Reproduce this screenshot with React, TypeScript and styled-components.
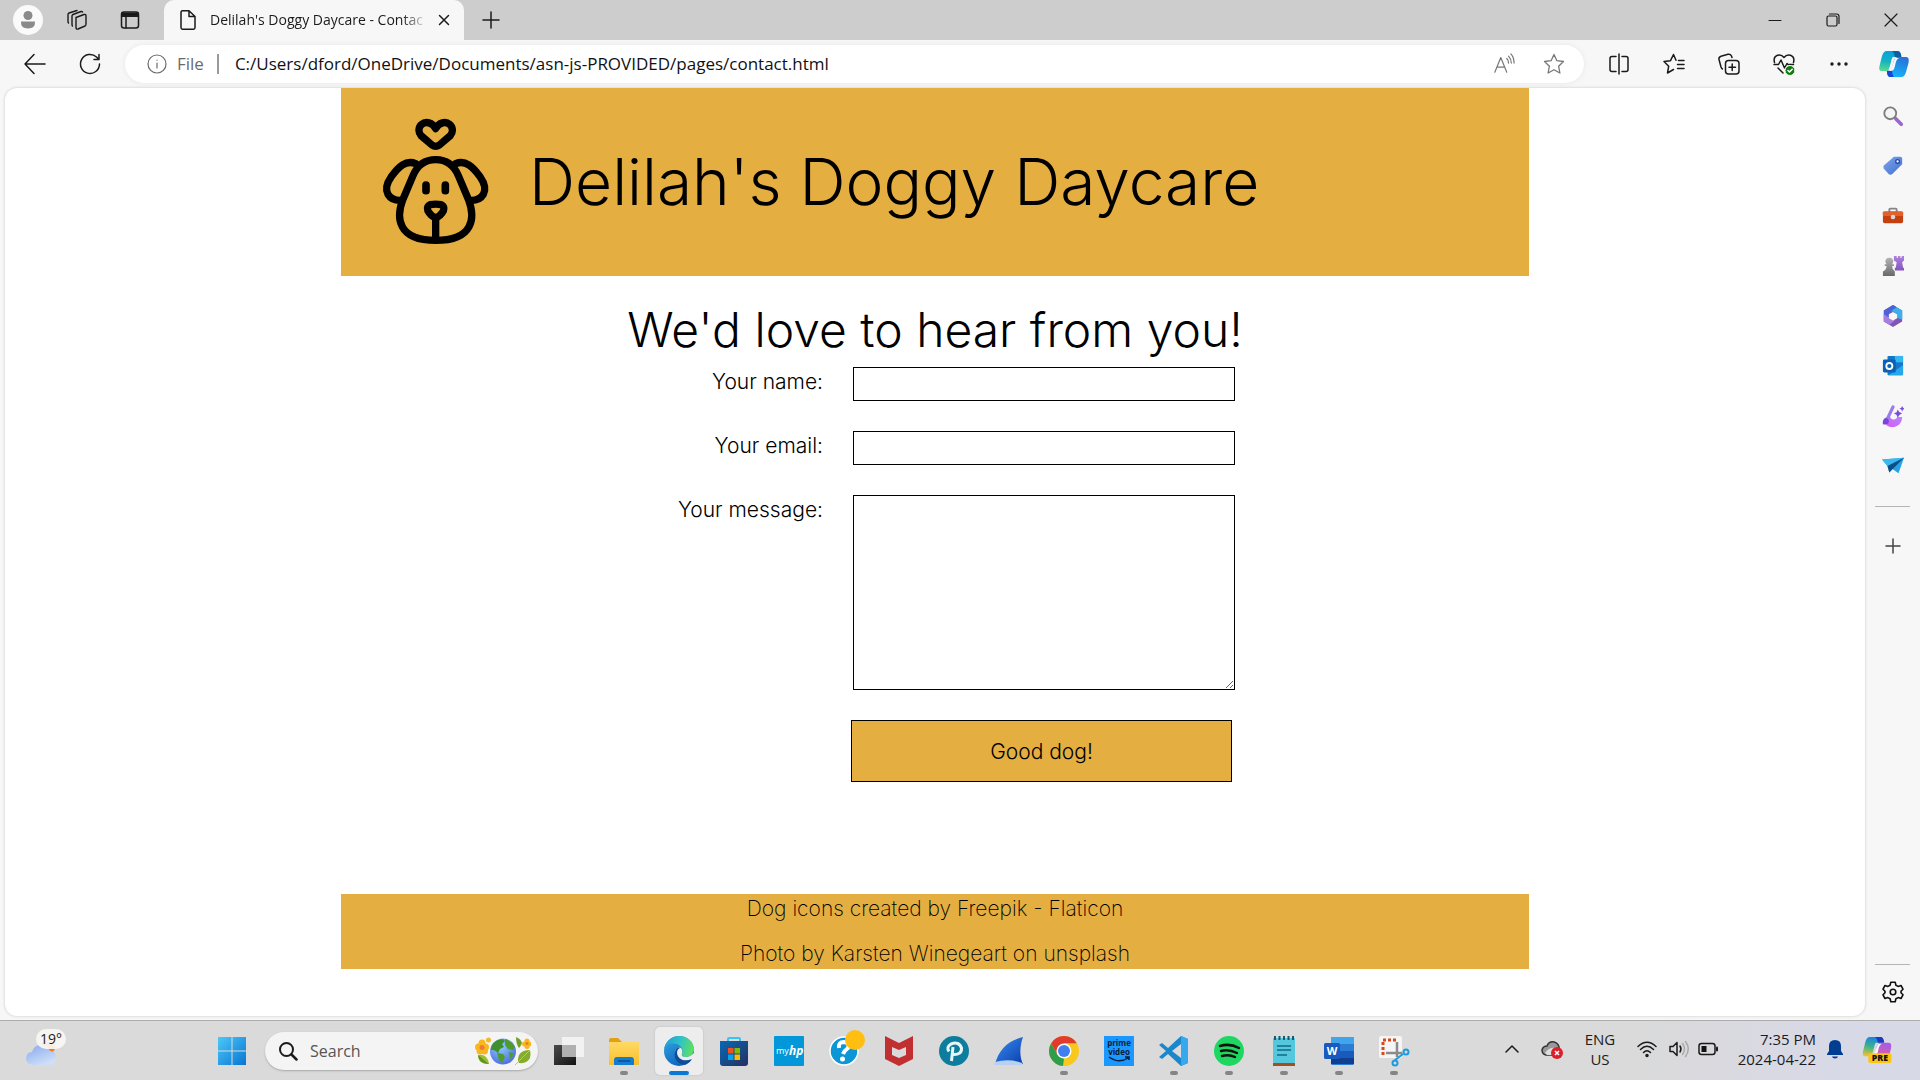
import React from "react";
import styled, { createGlobalStyle } from "styled-components";

const gold = "#e4ae40";
const uiFont = `"Open Sans", "Noto Sans", sans-serif`;
const pageFont = `Inter, "Open Sans", sans-serif`;

const GlobalStyle = createGlobalStyle`
  * { box-sizing: border-box; }
  body { margin: 0; background: #f7f7f7; font-family: ${uiFont}; }
  button { font: inherit; color: inherit; border: 0; background: none; padding: 0; }
`;

/* ---------- window ---------- */

const Screen = styled.div`
  display: flex;
  flex-direction: column;
  height: 100vh;
  background: #f7f7f7;
  overflow: hidden;
`;

const TitleBar = styled.header`
  display: flex;
  align-items: center;
  height: 40px;
  flex: none;
  padding-left: 6px;
  background: #cdcdcd;
`;

const BarButton = styled.button<{ $w?: number }>`
  display: flex;
  align-items: center;
  justify-content: center;
  flex: none;
  width: ${(p) => p.$w ?? 40}px;
  height: 40px;
`;

const Avatar = styled.span`
  display: flex;
  width: 30px;
  height: 30px;
  border-radius: 50%;
  background: #fafafa;
  align-items: center;
  justify-content: center;
`;

const Tab = styled.div`
  display: flex;
  align-items: center;
  align-self: stretch;
  width: 300px;
  margin-left: 8px;
  padding: 0 8px 0 14px;
  gap: 12px;
  border-radius: 10px 10px 0 0;
  background: #f7f7f7;
`;

const TabTitle = styled.span`
  flex: 1;
  overflow: hidden;
  white-space: nowrap;
  font-size: 14px;
  line-height: 24px;
  color: #1b1b1b;
  mask-image: linear-gradient(to right, #000 88%, transparent);
`;

const TabClose = styled.button`
  display: flex;
  align-items: center;
  justify-content: center;
  width: 24px;
  height: 24px;
  margin-left: -8px;
`;

const Spacer = styled.div`
  flex: 1;
`;

const ToolBar = styled.nav`
  display: flex;
  align-items: center;
  flex: none;
  height: 48px;
  gap: 15px;
  padding: 0 6px 0 15px;
`;

const AddressBar = styled.div`
  display: flex;
  align-items: center;
  flex: 1;
  min-width: 0;
  height: 38px;
  padding: 0 10px 0 22px;
  border-radius: 19px;
  background: #fff;
  box-shadow: 0 0 5px #e6e6e6;
  color: #6b6b6b;
  font-size: 17px;
`;

const SchemeText = styled.span`
  margin-left: 10px;
  padding-right: 13px;
  border-right: 2px solid #9a9a9a;
  line-height: 20px;
`;

const UrlInput = styled.input`
  flex: 1;
  min-width: 0;
  border: 0;
  outline: 0;
  padding: 0 16px;
  background: transparent;
  font-family: ${uiFont};
  font-size: 17px;
  line-height: 24px;
  color: #111;
`;

const AddressActions = styled.div`
  display: flex;
  gap: 10px;
`;

/* ---------- browser body ---------- */

const Body = styled.div`
  display: flex;
  flex: 1;
  min-height: 0;
  padding-left: 5px;
`;

const Viewport = styled.main`
  flex: 1;
  min-width: 0;
  margin-bottom: 4px;
  overflow: auto;
  border-radius: 12px;
  background: #fff;
  box-shadow: 0 0 3px #c4c4c4;
`;

const Site = styled.div`
  max-width: 1188px;
  margin: 0 auto;
  font-family: ${pageFont};
  color: #000;
`;

const SiteHeader = styled.header`
  display: flex;
  align-items: center;
  gap: 30px;
  padding: 30px;
  background: ${gold};
`;

const SiteTitle = styled.h1`
  margin: 0;
  font-size: 64px;
  line-height: 72px;
  font-weight: 300;
`;

const Heading = styled.h2`
  margin: 25px 0 8px;
  font-size: 48px;
  line-height: 58px;
  font-weight: 300;
  text-align: center;
`;

const Form = styled.form`
  display: grid;
  grid-template-columns: 188px 1fr;
  gap: 30px;
  max-width: 600px;
  margin: 0 auto;
`;

const Label = styled.label`
  padding-top: 3px;
  text-align: right;
  font-size: 21px;
  line-height: 24px;
  font-weight: 300;
`;

const TextField = styled.input`
  width: 100%;
  height: 34px;
  border: 1px solid #000;
  border-radius: 0;
  background: #fff;
  padding: 4px 8px;
  font: 300 21px ${pageFont};
`;

const MessageField = styled.textarea`
  display: block;
  width: 100%;
  height: 195px;
  border: 1px solid #000;
  background: #fff;
  padding: 8px;
  resize: both;
  font: 300 21px ${pageFont};
`;

const Submit = styled.button`
  grid-column: 2;
  height: 62px;
  margin: 0 3px 0 -2px;
  border: 1px solid #000;
  background: ${gold};
  font-size: 21px;
  font-weight: 300;
`;

const SiteFooter = styled.footer`
  display: flex;
  flex-direction: column;
  gap: 21px;
  margin-top: 112px;
  padding: 3px 0;
  background: ${gold};
  text-align: center;
  font-size: 21px;
  line-height: 24px;
  font-weight: 200;
`;

const Credit = styled.p`
  margin: 0;
`;

const SideBar = styled.aside`
  display: flex;
  flex-direction: column;
  align-items: center;
  gap: 18px;
  width: 55px;
  flex: none;
  padding-top: 12px;
`;

const SideButton = styled.button`
  display: flex;
  align-items: center;
  justify-content: center;
  width: 40px;
  height: 32px;
  flex: none;
`;

const SideRule = styled.hr`
  width: 35px;
  margin: 6px 0 5px;
  border: 0;
  border-top: 1px solid #b5b5b5;
`;

const SideFoot = styled.div`
  display: flex;
  flex-direction: column;
  align-items: center;
  gap: 6px;
  margin-top: auto;
  padding-bottom: 12px;
`;

/* ---------- task bar ---------- */

const TaskBar = styled.footer`
  display: flex;
  align-items: center;
  flex: none;
  height: 60px;
  padding: 0 20px 0 24px;
  border-top: 1px solid #acacac;
  background: linear-gradient(to right, #dadada 85%, #d8d9e6 95%);
  color: #1c1c1c;
  font-size: 15px;
  line-height: 20px;
`;

const Weather = styled.button`
  position: relative;
  width: 44px;
  height: 44px;
  margin-right: 140px;
  flex: none;
`;

const Temperature = styled.span`
  position: absolute;
  left: 12px;
  top: 0;
  width: 30px;
  border-radius: 10px;
  background: rgba(250, 247, 244, 0.92);
  font-size: 14px;
  text-align: center;
`;

const Apps = styled.div`
  display: flex;
  align-items: center;
  gap: 7px;
`;

const AppButton = styled.button<{ $active?: boolean }>`
  display: flex;
  flex-direction: column;
  align-items: center;
  gap: 5px;
  width: 48px;
  height: 48px;
  flex: none;
  padding-top: 9px;
  border-radius: 5px;
  background: ${(p) => (p.$active ? "#ededed" : "transparent")};
  box-shadow: ${(p) => (p.$active ? "0 0 2px #b8b8b8" : "none")};
`;

const RunMark = styled.span<{ $active?: boolean }>`
  width: ${(p) => (p.$active ? 20 : 8)}px;
  height: 4px;
  border-radius: 2px;
  background: ${(p) => (p.$active ? "#0a78d4" : "#858585")};
`;

const SearchBox = styled.label`
  display: flex;
  align-items: center;
  gap: 12px;
  width: 273px;
  height: 38px;
  flex: none;
  margin-left: 2px;
  padding: 0 7px 0 13px;
  border-radius: 19px;
  background: #f4f4f4;
  box-shadow: 0 1px 2px #a9a9a9;
`;

const SearchInput = styled.input`
  flex: 1;
  min-width: 0;
  border: 0;
  outline: 0;
  padding: 0;
  background: transparent;
  font-family: ${uiFont};
  font-size: 16px;
  &::placeholder { color: #555; opacity: 1; }
`;

const Tray = styled.div`
  display: flex;
  align-items: center;
  margin-left: auto;
  padding-bottom: 3px;
`;

const TrayButton = styled.button<{ $w: number }>`
  display: flex;
  align-items: center;
  justify-content: center;
  width: ${(p) => p.$w}px;
  height: 44px;
  flex: none;
`;

const Clock = styled.button`
  width: 92px;
  text-align: right;
`;

/* ---------- drawings ---------- */

type IconProps = { size?: number; h?: number; box?: string; color?: string; sw?: number; children: React.ReactNode };

const Line = ({ size = 24, h, box = "0 0 24 24", color = "#1b1b1b", sw = 1.5, children }: IconProps) => (
  <svg width={size} height={h ?? size} viewBox={box} fill="none" stroke={color} strokeWidth={sw} strokeLinecap="round" strokeLinejoin="round" aria-hidden="true">
    {children}
  </svg>
);

const Art = ({ size = 30, h, box = "0 0 30 30", children }: IconProps) => (
  <svg width={size} height={h ?? size} viewBox={box} aria-hidden="true">
    {children}
  </svg>
);

const HiddenDefs = styled.svg`
  position: absolute;
`;

const Gradients = () => (
  <HiddenDefs width="0" height="0" aria-hidden="true">
    <defs>
      <linearGradient id="win" x1="0" y1="0" x2="1" y2="1"><stop offset="0" stopColor="#4cc9f7" /><stop offset="1" stopColor="#0874d4" /></linearGradient>
      <linearGradient id="teal" x1="0.3" y1="0" x2="0.2" y2="1"><stop offset="0" stopColor="#0a9fe0" /><stop offset="0.5" stopColor="#14b3c0" /><stop offset="1" stopColor="#5fdc8c" /></linearGradient>
      <linearGradient id="blue" x1="0.8" y1="0" x2="0.4" y2="1"><stop offset="0" stopColor="#2a6fd6" /><stop offset="1" stopColor="#16b4f8" /></linearGradient>
      <linearGradient id="rain" x1="0.5" y1="0" x2="0.3" y2="1"><stop offset="0" stopColor="#1a7fe8" /><stop offset="0.5" stopColor="#3cb489" /><stop offset="1" stopColor="#f2c230" /></linearGradient>
      <linearGradient id="pink" x1="0.6" y1="0" x2="0.4" y2="1"><stop offset="0" stopColor="#a55be8" /><stop offset="1" stopColor="#f4617f" /></linearGradient>
      <linearGradient id="cloud" x1="0" y1="0" x2="0.6" y2="1"><stop offset="0" stopColor="#86a9ec" /><stop offset="1" stopColor="#cfdff8" /></linearGradient>
      <linearGradient id="folder" x1="0" y1="0" x2="0" y2="1"><stop offset="0" stopColor="#ffd964" /><stop offset="1" stopColor="#f9bf2c" /></linearGradient>
      <linearGradient id="edgeTop" x1="0" y1="0.4" x2="1" y2="0.6"><stop offset="0" stopColor="#1d9fd8" /><stop offset="0.5" stopColor="#2fc4c4" /><stop offset="1" stopColor="#63e05a" /></linearGradient>
      <linearGradient id="edgeLow" x1="0" y1="0" x2="0.6" y2="1"><stop offset="0" stopColor="#36a8e0" /><stop offset="1" stopColor="#0c62bd" /></linearGradient>
      <linearGradient id="store" x1="0" y1="0" x2="1" y2="1"><stop offset="0" stopColor="#0a67b5" /><stop offset="1" stopColor="#25315e" /></linearGradient>
      <linearGradient id="fin" x1="0" y1="0" x2="1" y2="1"><stop offset="0" stopColor="#3b8df2" /><stop offset="1" stopColor="#0a3fae" /></linearGradient>
      <linearGradient id="tag" x1="0" y1="0" x2="1" y2="1"><stop offset="0" stopColor="#7fa6ee" /><stop offset="1" stopColor="#3f6fce" /></linearGradient>
      <linearGradient id="grey" x1="0" y1="0" x2="0" y2="1"><stop offset="0" stopColor="#b4b4b4" /><stop offset="1" stopColor="#696969" /></linearGradient>
      <linearGradient id="violet" x1="0" y1="0" x2="0" y2="1"><stop offset="0" stopColor="#b083e0" /><stop offset="1" stopColor="#8254bd" /></linearGradient>
      <linearGradient id="magenta" x1="0" y1="1" x2="1" y2="0"><stop offset="0" stopColor="#d65af2" /><stop offset="1" stopColor="#b38cff" /></linearGradient>
      <radialGradient id="globe" cx="0.4" cy="0.3" r="0.8"><stop offset="0" stopColor="#8fd0fb" /><stop offset="1" stopColor="#4a62dc" /></radialGradient>
      <linearGradient id="dark" x1="0" y1="0" x2="1" y2="1"><stop offset="0" stopColor="#4a4a4a" /><stop offset="1" stopColor="#141414" /></linearGradient>
    </defs>
  </HiddenDefs>
);

const DogLogo = () => (
  <svg width="128" height="128" viewBox="3 39 384 384" fill="none" stroke="#000" strokeWidth="22" strokeLinecap="round" strokeLinejoin="round" role="img" aria-label="Dog">
    <path d="M197 71C187 52 167 48 155 58C145 66 144 82 153 92L186 120Q197 128 208 120L241 92C250 82 249 66 239 58C227 48 207 52 197 71Z" />
    <path d="M197 164C162 164 142 181 129 212L98 285C85 320 86 345 97 365C113 395 155 406 197 406C239 406 281 395 297 365C308 345 309 320 296 285L265 212C252 181 232 164 197 164Z" />
    <path d="M137 176C108 164 86 184 64 215C48 238 46 254 54 268C61 280 74 286 90 286" />
    <path d="M257 176C286 164 308 184 330 215C346 238 348 254 340 268C333 280 320 286 304 286" />
    <path d="M168 240V257M226 240V257" strokeWidth="23" />
    <path d="M181 299Q197 296 213 299C224 304 224 315 216 324Q206 337 197 337Q188 337 178 324C170 315 170 304 181 299Z" />
    <path d="M197 342V402" />
  </svg>
);

const Copilot = ({ preview }: { preview?: boolean }) => (
  <Art size={30} box="0 0 30 30" h={preview ? 29 : 30}>
    <path d="M8 2H18C21 2 22 4 21.500 8H15C13 8 13 9 12 13L10 20C9 22 8 23 6 22H3C0 22 0 20 .5 17L3 7C4 4 5 2 8 2Z" fill={preview ? "url(#rain)" : "url(#teal)"} />
    <path d="M13 2H18C21 2 22 4 22.500 8H16C15 5 15 3 13 2Z" fill={preview ? "#2038c0" : "#0f5f9e"} />
    <path d="M22 28H12C9 28 8 26 8 22C11 22 12 21 13 18L15 11C16 8 18 8 20 8H27C30 8 30 11 29.500 14L27 23C26 26 25 28 22 28Z" fill={preview ? "url(#pink)" : "url(#blue)"} />
    <path d="M15 28H12C9 28 8 26 8 22C11 22 12 21 13 19Q13 26 15 28Z" fill={preview ? "#f4853f" : "#1746d8"} />
    <path d="M16 9H20C17 11 17 13 16 17L15 20C14 22 12 22 10 22Q12 20 13 17Z" fill="#f7f7f7" />
    {preview && (
      <g>
        <rect x="6" y="19" width="24" height="10" rx="2" fill="#fdc513" />
        <text x="18" y="27" fontFamily="Open Sans" fontWeight="800" fontSize="9" textAnchor="middle" fill="#111">PRE</text>
      </g>
    )}
  </Art>
);

const SearchArt = () => (
  <svg width="56" height="30" viewBox="0 0 56 30" aria-hidden="true">
    <g fill="#f8b71c">
      <circle cx="7" cy="7" r="3.500" /><circle cx="3.500" cy="11" r="3.500" /><circle cx="10.500" cy="11" r="3.500" /><circle cx="5" cy="15" r="3.500" /><circle cx="9.500" cy="15" r="3.500" />
      <circle cx="13.500" cy="4" r="2.500" />
      <circle cx="52" cy="5" r="2.500" /><circle cx="49.500" cy="8" r="2.500" /><circle cx="54" cy="8" r="2.500" /><circle cx="52" cy="10.500" r="2.500" />
    </g>
    <circle cx="7" cy="11.500" r="2.500" fill="#f0793a" /><circle cx="52" cy="7.500" r="1.500" fill="#f0793a" />
    <path d="M3 19Q8 18 11 21Q14 24 14 28Q8 28 5 25Q3 22 3 19Z" fill="#9dbf2e" />
    <path d="M3 19L14 28Q8 28 5 25Q3 22 3 19Z" fill="#5f9426" />
    <path d="M41 1Q46 3 47 7Q46 10 44 12Q41 8 41 1Z" fill="#6fa02b" />
    <path d="M55 14Q47 14 44 19Q42 24 44 27Q52 28 55 22Q56 18 55 14Z" fill="#86ad2a" />
    <path d="M55 14L40 29" stroke="#b9cf4a" />
    <circle cx="28" cy="15.500" r="13" fill="url(#globe)" />
    <path d="M17 9Q21 3 28 3L30 5L27 8L29 11L25 13L23 17L19 14L16 14Q16 11 17 9Z" fill="#3f8f2a" />
    <path d="M30 3Q37 5 40 11L38 14L33 13L30 9ZM22 17L28 18L30 21L27 27L24 24ZM34 16L39 17Q38 21 35 23Z" fill="#4c9c2e" />
  </svg>
);

const Gear = () => (
  <Line size={24} sw={1.6} color="#111">
    <path d="M9.800 2.200H14.200L14.900 5.200L17.100 6.400L20 5.500L22 9.200L20 11.300V12.700L22 14.800L20 18.500L17.100 17.600L14.900 18.800L14.200 21.800H9.800L9.100 18.800L6.900 17.600L4 18.500L2 14.800L4 12.700V11.300L2 9.200L4 5.500L6.900 6.400L9.100 5.200Z" />
    <circle cx="12" cy="12" r="2.800" />
  </Line>
);

const starPath = "M12 2.500L14.900 8.700L21.500 9.500L16.600 14.200L17.900 21L12 17.700L6.100 21L7.400 14.200L2.500 9.500L9.100 8.700Z";

const sideItems = [
  { name: "Search", art: <g><path d="M15 15L21 21" stroke="#9a66cf" strokeWidth="4" strokeLinecap="round" /><circle cx="9" cy="9" r="6.500" fill="#f4f4f4" stroke="#7c7c7c" strokeWidth="2" /></g> },
  { name: "Shopping", art: <g><path d="M13 2L20 2Q22 2 22 4V10L11 21Q9 22 7.500 21L2 15Q1 13 2 11.500Z" fill="url(#tag)" /><circle cx="17" cy="7" r="2" fill="#fff" stroke="#264a9c" strokeWidth="1.500" /></g> },
  { name: "Tools", art: <g><path d="M8 8V5Q8 4 9 4H15Q16 4 16 5V8" fill="none" stroke="#858585" strokeWidth="2" /><rect x="1" y="7" width="22" height="13" rx="2" fill="#c5400f" /><rect x="1" y="7" width="22" height="5" rx="1" fill="#e4602b" /><circle cx="12" cy="13" r="2.500" fill="#d8d8d8" /></g> },
  { name: "Games", art: <g><path d="M13 1H16V3H17.500V1H20V3H21.500V1H24V6L22 8L23 14H24V17H14V14H15L16 8L13 6Z" fill="url(#violet)" /><path d="M8 3A4 4 0 0 1 11 10H13V12H11Q11 16 14 18V23H1V18Q5 16 5 12H3V10H5A4 4 0 0 1 8 3Z" fill="url(#grey)" /></g> },
  { name: "Microsoft 365", art: <g><path d="M12 0L22 6V18L12 24L2 18V6Z" fill="#8255b5" /><path d="M12 0L22 6V16L16.500 14V9.500L9 6Z" fill="#38b2e8" /><path d="M12 0L16 2.500L8 8V14L2 18V6Z" fill="#4b63d8" /><path d="M2 10L8 14L14 17L8 21.500L2 18Z" fill="#a77fe0" /><path d="M12 7.500L16.500 10V14.500L12 17L7.500 14.500V10Z" fill="#f7f7f7" /></g> },
  { name: "Outlook", art: <g><rect x="6" y="1" width="17" height="21" rx="1" fill="#1478c8" /><path d="M14 1H23V8H14Z" fill="#35b8f1" /><path d="M7 22L23 11V21Q23 22 22 22Z" fill="#27a6ea" /><rect x="1" y="5" width="14" height="14" rx="1.500" fill="#0862b5" /><circle cx="8" cy="12" r="3.300" fill="none" stroke="#fff" strokeWidth="2" /></g> },
  { name: "Designer", art: <g><path d="M8 9C8 16 13 18 17 13L22 13C22 20 17 24 11 24C6 24 3 21 3 16Z" fill="url(#magenta)" /><path d="M12 2L5 17" stroke="#9a7af0" strokeWidth="3.500" strokeLinecap="round" /><path d="M4 14Q9 16 7 20Q5 22 1 21Q0 16 4 14Z" fill="#7a46d8" /><path d="M17 5L19 8L22 9L19 11L17 14L16 11L13 9L16 8ZM22 1L23 3L25 4L23 5L22 7L21 5L19 4L21 3Z" fill="#7d4ae0" /></g> },
  { name: "Drop", art: <g><path d="M0 5L24 3L18 20L11 15L8 19L6 12Z" fill="#27a3e4" /><path d="M0 5L24 3L6 12Z" fill="#3bb8f0" /><path d="M6 12L24 3L8 19Z" fill="#0b4f8a" /></g> },
];

const apps: { name: string; open?: boolean; active?: boolean; art: React.ReactNode }[] = [
  { name: "Task View", art: <g><rect x="0" y="9" width="22" height="20" fill="url(#dark)" /><rect x="8" y="1" width="22" height="20" fill="#f9f9f9" fillOpacity=".75" /><rect x="8" y="9" width="14" height="12" fill="#999" fillOpacity=".5" /></g> },
  { name: "File Explorer", open: true, art: <g><path d="M0 4Q0 2 2 2H9L13 6H28V14H0Z" fill="#e3a011" /><rect x="0" y="6" width="30" height="23" rx="1" fill="url(#folder)" /><path d="M5 29V24Q5 21 8 21H22Q25 21 25 24V29Z" fill="#137bd0" /><path d="M9 25H21" stroke="#0a4f92" strokeWidth="1.500" /></g> },
  { name: "Edge", open: true, active: true, art: <g><circle cx="15" cy="15" r="15" fill="url(#edgeLow)" /><path d="M0 13C2 5 8 0 15 0C24 0 30 6 30 13C30 18 26 21 22 21C19 21 17 20 18 18C19 16 19 13 16 10C11 6 4 7 0 13Z" fill="url(#edgeTop)" /><path d="M11 17C11 13 13 11 17 12Q19 14 18 18C17 20 19 21 22 21Q26 21 30 17V24H27C22 27 11 26 11 17Z" fill="#ededed" /><path d="M11 16C9 24 16 30 22 28.500Q26 27 28 23C21 26 14 24 13 17Q13 13 16 12Q12 11 11 16Z" fill="#104d99" /></g> },
  { name: "Store", art: <g><path d="M9 7V3Q9 2 10 2H20Q21 2 21 3V7" fill="none" stroke="#35c4f5" strokeWidth="2" /><path d="M1 5H29V27Q29 30 26 30H4Q1 30 1 27Z" fill="url(#store)" /><path d="M9 12H14.500V17.500H9Z" fill="#f05022" /><path d="M15.500 12H21V17.500H15.500Z" fill="#7fbb00" /><path d="M9 18.500H14.500V24H9Z" fill="#00a5ef" /><path d="M15.500 18.500H21V24H15.500Z" fill="#ffb900" /></g> },
  { name: "myHP", art: <g><rect width="30" height="30" rx="1" fill="#0297d8" /><text x="2" y="18" fontFamily="Open Sans" fontSize="9" fill="#fff">my</text><text x="15" y="19" fontFamily="Open Sans" fontStyle="italic" fontWeight="700" fontSize="12" fill="#fff">hp</text></g> },
  { name: "Support", art: <g><circle cx="15" cy="15" r="14" fill="#0b97d6" stroke="#fff" strokeWidth="1.500" /><path d="M10 12Q9 6 15 6Q21 7 19 12Q15 15 14 18" fill="none" stroke="#fff" strokeWidth="4" /><circle cx="13.500" cy="23" r="2.500" fill="#fff" /><circle cx="26" cy="4" r="10" fill="#ffbe10" /></g> },
  { name: "McAfee", art: <path d="M1 0L15 7L29 0V23L15 30L1 23ZM8 11V19L15 22L22 19V11L15 14Z" fill="#c12f30" fillRule="evenodd" /> },
  { name: "Pearson", art: <g><circle cx="15" cy="15" r="15" fill="#0c7d9c" /><path d="M12.500 25L14 11M14 18.500Q23 19 22.500 12Q20 5 12 8Q7 11 10 15.500" fill="none" stroke="#e8f6fa" strokeWidth="3" /></g> },
  { name: "Wireshark", art: <g><path d="M1 28C5 13 15 4 29 1C25 12 26 22 29 28Z" fill="url(#fin)" /><path d="M1 26Q15 22 28 27L29 29H0Z" fill="#b9d0ef" /></g> },
  { name: "Chrome", open: true, art: <g><circle cx="15" cy="15" r="15" fill="#f9c81c" /><path d="M2 7.500A15 15 0 0 1 28 7.500H15L8.500 18.700Z" fill="#e23b2e" /><path d="M2 7.500L8.500 18.700L15 22.500L14 30A15 15 0 0 1 2 7.500Z" fill="#2f9e4a" /><path d="M21.500 18.700L14.500 30Q22 30 27 24Q31 16 28 7.500H15Z" fill="#f9c81c" /><circle cx="15" cy="15" r="7.500" fill="#fff" /><circle cx="15" cy="15" r="6" fill="#3f7ff0" /></g> },
  { name: "Prime Video", art: <g><rect width="30" height="30" fill="#1a98ff" /><text x="15" y="10" textAnchor="middle" fontFamily="Open Sans" fontWeight="700" fontSize="8" fill="#0b1d38">prime</text><text x="15" y="19" textAnchor="middle" fontFamily="Open Sans" fontWeight="700" fontSize="8" fill="#0b1d38">video</text><path d="M5 21Q15 28 24 22M21 21H25V24" fill="none" stroke="#0b1d38" strokeWidth="1.500" /></g> },
  { name: "VS Code", open: true, art: <g><path d="M22 0L29 3V27L22 30L9 18L3 23L0 21L7 15L0 9L3 7L9 12ZM22 8L13 15L22 22Z" fill="#1a86cc" fillRule="evenodd" /><path d="M22 0L29 3V27L22 30Z" fill="#35a8ee" /></g> },
  { name: "Spotify", open: true, art: <g><circle cx="15" cy="15" r="15" fill="#1ed760" /><path d="M6 10Q16 7 25 12M7 15Q15 13 23 17M8 20Q15 18 21 21" fill="none" stroke="#111" strokeWidth="2.500" strokeLinecap="round" /></g> },
  { name: "Notepad", open: true, art: <g><rect x="4" y="27" width="22" height="3" fill="#a1511a" /><rect x="4" y="2" width="22" height="25" rx="1" fill="#55c8de" /><path d="M8 10H22M8 14H22M8 19H18" stroke="#126a86" strokeWidth="1.500" /><path d="M6 0V4M10.500 0V4M15 0V4M19.500 0V4M24 0V4" stroke="#17596f" strokeWidth="2" /></g> },
  { name: "Word", open: true, art: <g><rect x="7" y="1" width="23" height="28" rx="1.500" fill="#2b7cd3" /><path d="M7 1H30V8H7Z" fill="#41a5ee" /><path d="M7 15H30V22H7Z" fill="#185abd" /><path d="M7 22H30V28H7Z" fill="#103f91" /><rect x="0" y="7" width="16" height="16" rx="1.500" fill="#185abd" /><text x="8" y="19" textAnchor="middle" fontFamily="Open Sans" fontWeight="700" fontSize="11" fill="#fff">W</text></g> },
  { name: "Snipping Tool", open: true, art: <g><rect x="0" y="0" width="23" height="22" rx="2" fill="#f5f5f5" /><path d="M4 19V4H17" fill="none" stroke="#d84a1b" strokeWidth="3" strokeDasharray="3 2" /><path d="M18 6V21M7 17H23" stroke="#8b8b8b" strokeWidth="2.500" /><circle cx="27" cy="16" r="2.500" fill="none" stroke="#1e9be0" strokeWidth="2" /><circle cx="16" cy="27" r="2.500" fill="none" stroke="#1e9be0" strokeWidth="2" /><path d="M24 18L16 24" stroke="#1e9be0" strokeWidth="2" /></g> },
];

export default function App() {
  return (
    <Screen>
      <GlobalStyle />
      <Gradients />
      <TitleBar>
        <BarButton $w={44} aria-label="Profile">
          <Avatar>
            <Art size={20} box="0 0 20 20"><circle cx="10" cy="5.500" r="4.500" fill="#8a8a8a" /><path d="M3 11.500H17Q17.500 18.500 10 18.500Q2.500 18.500 3 11.500Z" fill="#8a8a8a" /></Art>
          </Avatar>
        </BarButton>
        <BarButton $w={54} aria-label="Workspaces">
          <Line size={24} sw={1.4}><path d="M11 9.500L19 6.500Q21 6 21 8V16Q21 17.500 20 18L13 21Q11 21.500 11 19.500Z" /><path d="M7.500 18Q7 17.500 7 16.500V8Q7 7 8 6.500L16 3.500Q17 3.300 17.500 4" /><path d="M3.500 15Q3 14.500 3 13.500V6.500Q3 5.500 4 5L12 2.500" /></Line>
        </BarButton>
        <BarButton $w={52} aria-label="Tab actions">
          <Line size={20} box="0 0 20 20"><rect x="1.500" y="2" width="17" height="16" rx="2.500" /><path d="M2 3.500H18V6H2Z" fill="#111" strokeWidth="2" /><path d="M6 7V18" /></Line>
        </BarButton>
        <Tab>
          <Line size={20} box="0 0 20 20"><path d="M4 .8H11L17 6.500V17.500Q17 19.200 15.500 19.200H4.500Q3 19.200 3 17.500V2.500Q3 .8 4.500 .8M11 1V6.500H17" /></Line>
          <TabTitle>Delilah's Doggy Daycare - Contac</TabTitle>
          <TabClose aria-label="Close tab"><Line size={12} box="0 0 12 12"><path d="M1.500 1.500L10.500 10.500M10.500 1.500L1.500 10.500" /></Line></TabClose>
        </Tab>
        <BarButton $w={54} aria-label="New tab"><Line size={18} box="0 0 18 18"><path d="M9 1V17M1 9H17" /></Line></BarButton>
        <Spacer />
        <BarButton $w={58} aria-label="Minimize"><Line size={14} box="0 0 14 14" sw={1}><path d="M1 7.500H13" /></Line></BarButton>
        <BarButton $w={58} aria-label="Restore"><Line size={14} box="0 0 14 14" sw={1.2}><rect x="1" y="3" width="10" height="10" rx="1.500" /><path d="M3.500 1H10.500Q13 1 13 3.500V10.500" /></Line></BarButton>
        <BarButton $w={58} aria-label="Close"><Line size={14} box="0 0 14 14" sw={1.2}><path d="M1 1L13 13M13 1L1 13" /></Line></BarButton>
      </TitleBar>

      <ToolBar>
        <BarButton aria-label="Back"><Line><path d="M22 12H2M11 2.500L2 12L11 21.500" /></Line></BarButton>
        <BarButton aria-label="Refresh"><Line><path d="M21.500 12A9.500 9.500 0 1 1 18.500 5L21 7.500M21 2.500V7.500H16" /></Line></BarButton>
        <AddressBar>
          <Line size={20} box="0 0 20 20" color="#6b6b6b" sw={1.2}><circle cx="10" cy="10" r="9" /><path d="M10 9V14M10 6V6.200" /></Line>
          <SchemeText>File</SchemeText>
          <UrlInput aria-label="Address" defaultValue="C:/Users/dford/OneDrive/Documents/asn-js-PROVIDED/pages/contact.html" />
          <AddressActions>
            <BarButton aria-label="Read aloud"><Line size={22} color="#777" sw={1.3}><path d="M2 21L8.500 5L15 21M4.500 15.500H12.500M15 6Q17 8 17 11M17 3.500Q20 7 20 11M19.500 1Q23 5 23 11" /></Line></BarButton>
            <BarButton aria-label="Favourite"><Line color="#777" sw={1.3}><path d={starPath} /></Line></BarButton>
          </AddressActions>
        </AddressBar>
        <BarButton aria-label="Split screen"><Line><path d="M9 4.500H5Q3 4.500 3 6.500V17.500Q3 19.500 5 19.500H9M15 4.500H19Q21 4.500 21 6.500V17.500Q21 19.500 19 19.500H15M12 2V22" /></Line></BarButton>
        <BarButton aria-label="Favourites"><Line><path d="M16.500 8.500H22M15.500 12.500H22M15.500 16.500H22M14 8.300L11.500 2.500L8.500 8.700L2 9.500L6.700 14.200L5.500 21L11.500 17.500" /></Line></BarButton>
        <BarButton aria-label="Collections"><Line><rect x="8.500" y="8.500" width="13.500" height="13.500" rx="3" /><path d="M15.200 12V18.500M12 15.200H18.500M5.500 17Q4.500 16.500 4 15L2 7.500Q1.500 5 4 4.200L11 2.200Q13.500 1.800 14.500 4L15 5.500" /></Line></BarButton>
        <BarButton aria-label="Browser essentials">
          <Line><path d="M2.500 10.500Q1 5 5.500 3.300Q9.500 2.300 12 5.500Q14.500 2.300 18.500 3.300Q23 5 21.500 10.500M2 12.500H6.500L9 8L12.500 16L15 11.500L16 12.500H21.500M6 16L11 21" /><circle cx="18" cy="18.500" r="5" fill="#107c10" stroke="#f7f7f7" strokeWidth="1" /><path d="M16 18.500L17.500 20L20.200 17.200" stroke="#fff" /></Line>
        </BarButton>
        <BarButton aria-label="More"><Line><g fill="#1b1b1b" stroke="none"><circle cx="5" cy="12" r="1.700" /><circle cx="12" cy="12" r="1.700" /><circle cx="19" cy="12" r="1.700" /></g></Line></BarButton>
        <BarButton aria-label="Copilot"><Copilot /></BarButton>
      </ToolBar>

      <Body>
        <Viewport>
          <Site>
            <SiteHeader>
              <DogLogo />
              <SiteTitle>Delilah's Doggy Daycare</SiteTitle>
            </SiteHeader>
            <Heading>We'd love to hear from you!</Heading>
            <Form onSubmit={(e) => e.preventDefault()}>
              <Label htmlFor="name">Your name:</Label>
              <TextField id="name" type="text" />
              <Label htmlFor="email">Your email:</Label>
              <TextField id="email" type="email" />
              <Label htmlFor="message">Your message:</Label>
              <MessageField id="message" />
              <Submit type="submit">Good dog!</Submit>
            </Form>
            <SiteFooter>
              <Credit>Dog icons created by Freepik - Flaticon</Credit>
              <Credit>Photo by Karsten Winegeart on unsplash</Credit>
            </SiteFooter>
          </Site>
        </Viewport>
        <SideBar>
          {sideItems.map((s) => (
            <SideButton key={s.name} aria-label={s.name}><Art size={22} box="0 0 24 24">{s.art}</Art></SideButton>
          ))}
          <SideRule />
          <SideButton aria-label="Customize"><Line size={16} box="0 0 16 16" color="#444"><path d="M8 1V15M1 8H15" /></Line></SideButton>
          <SideFoot>
            <SideRule />
            <SideButton aria-label="Settings"><Gear /></SideButton>
          </SideFoot>
        </SideBar>
      </Body>

      <TaskBar>
        <Weather aria-label="Weather">
          <Art size={44} box="0 0 44 44">
            <circle cx="24" cy="18" r="7" fill="#f07b24" />
            <path d="M9 36Q2 35 2 29Q3 23 8 23Q10 16 17 16Q24 16 26 22Q32 22 32 29Q32 35 27 36Z" fill="url(#cloud)" />
          </Art>
          <Temperature>19°</Temperature>
        </Weather>
        <Apps>
          <AppButton aria-label="Start"><Art size={30}><path d="M1 1H14.500V14.500H1ZM15.500 1H29V14.500H15.500ZM1 15.500H14.500V29H1ZM15.500 15.500H29V29H15.500Z" fill="url(#win)" /></Art></AppButton>
          <SearchBox>
            <Line size={20} box="0 0 20 20" sw={2}><circle cx="8.500" cy="8.500" r="6.500" /><path d="M13.500 13.500L18.500 18.500" strokeWidth="2.500" /></Line>
            <SearchInput placeholder="Search" aria-label="Search" />
            <SearchArt />
          </SearchBox>
          {apps.map((a) => (
            <AppButton key={a.name} aria-label={a.name} $active={a.active}>
              <svg width="30" height="30" viewBox="0 0 30 30" overflow="visible" aria-hidden="true">{a.art}</svg>
              {a.open && <RunMark $active={a.active} />}
            </AppButton>
          ))}
        </Apps>
        <Tray>
          <TrayButton $w={40} aria-label="Show hidden icons"><Line size={16} box="0 0 16 16"><path d="M2 11L8 5L14 11" /></Line></TrayButton>
          <TrayButton $w={40} aria-label="OneDrive">
            <Art size={22} box="0 0 22 22"><path d="M5 17Q1 16 1 12Q2 8 6 8Q8 3 13 4Q17 5 18 9V17Z" fill="#999" stroke="#333" strokeWidth="1.500" /><path d="M4 15Q8 9 15 10L16 17H6Z" fill="#ddd" /><circle cx="16" cy="15" r="6" fill="#d9202c" /><path d="M14 13L18 17M18 13L14 17" stroke="#fff" strokeWidth="1.500" /></Art>
          </TrayButton>
          <TrayButton $w={56}>ENG<br />US</TrayButton>
          <TrayButton $w={37} aria-label="Network"><Line size={20} box="0 0 20 20"><path d="M1 7.500Q10 -1 19 7.500M3.500 10.500Q10 4 16.500 10.500M6.500 13.500Q10 10 13.500 13.500" /><circle cx="10" cy="16.500" r="1" fill="#111" /></Line></TrayButton>
          <TrayButton $w={27} aria-label="Volume"><Line size={20} box="0 0 20 20"><path d="M1 7.500H4L8 3.500V16.500L4 12.500H1Z" /><path d="M11 7Q13 10 11 13" /><path d="M13.500 4.500Q17.500 10 13.500 15.500M16.500 2.500Q22 10 16.500 17.500" stroke="#aaa" /></Line></TrayButton>
          <TrayButton $w={32} aria-label="Battery"><Line size={20} box="0 0 20 20"><rect x="1" y="4.500" width="16" height="11" rx="2.500" /><path d="M19 8.500V11.500" strokeWidth="2" /><rect x="3.500" y="7" width="5" height="6" fill="#111" stroke="none" /></Line></TrayButton>
          <Clock>7:35 PM<br />2024-04-22</Clock>
          <TrayButton $w={38} aria-label="Notifications"><Art size={18} box="0 0 18 20" h={20}><path d="M9 1Q15 1 15 7V12L17 15V16H1V15L3 12V7Q3 1 9 1ZM6 17.500H12Q11.500 19.500 9 19.500Q6.500 19.500 6 17.500Z" fill="#003e92" /></Art></TrayButton>
          <TrayButton $w={46} aria-label="Copilot preview"><Copilot preview /></TrayButton>
        </Tray>
      </TaskBar>
    </Screen>
  );
}
